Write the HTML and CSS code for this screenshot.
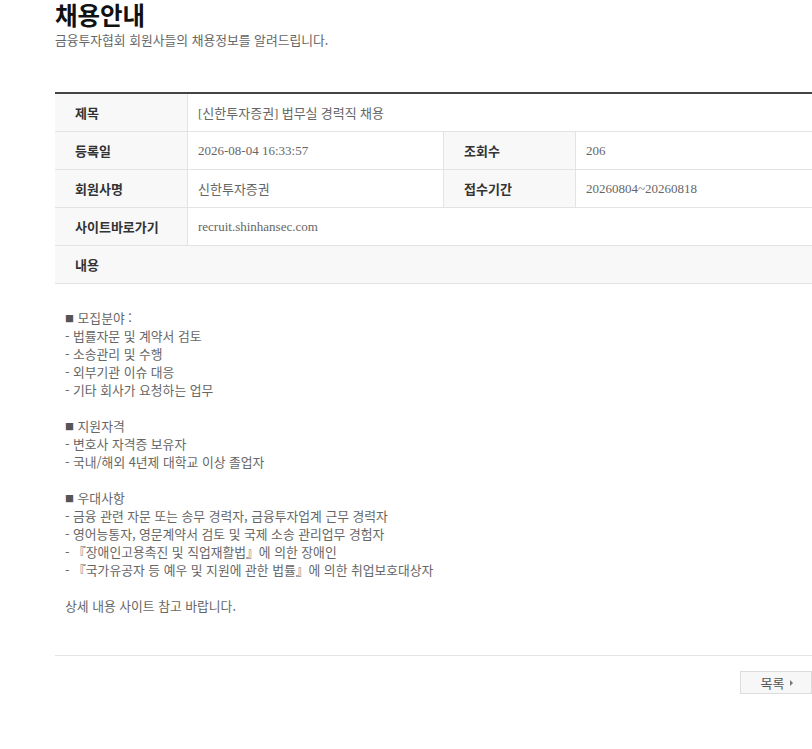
FILE: index.html
```html
<!DOCTYPE html>
<html lang="ko">
<head>
<meta charset="utf-8">
<title>채용안내</title>
<link rel="stylesheet" href="styles.css">
</head>
<body>
<div class="page">
  <h1 class="title">채용안내</h1>
  <p class="subtitle">금융투자협회 회원사들의 채용정보를 알려드립니다.</p>

  <div class="board">
    <div class="th">제목</div>
    <div class="td span3">[신한투자증권] 법무실 경력직 채용</div>

    <div class="th">등록일</div>
    <div class="td">2026-08-04 16:33:57</div>
    <div class="th">조회수</div>
    <div class="td last">206</div>

    <div class="th">회원사명</div>
    <div class="td">신한투자증권</div>
    <div class="th">접수기간</div>
    <div class="td last">20260804~20260818</div>

    <div class="th">사이트바로가기</div>
    <div class="td span3">recruit.shinhansec.com</div>

    <div class="th full">내용</div>
  </div>

  <div class="content">
    <p><span class="sq">■</span> 모집분야 :<br>- 법률자문 및 계약서 검토<br>- 소송관리 및 수행<br>- 외부기관 이슈 대응<br>- 기타 회사가 요청하는 업무</p>
    <p><span class="sq">■</span> 지원자격<br>- 변호사 자격증 보유자<br>- 국내/해외 4년제 대학교 이상 졸업자</p>
    <p><span class="sq">■</span> 우대사항<br>- 금융 관련 자문 또는 송무 경력자, 금융투자업계 근무 경력자<br>- 영어능통자, 영문계약서 검토 및 국제 소송 관리업무 경험자<br>- 『장애인고용촉진 및 직업재활법』에 의한 장애인<br>- 『국가유공자 등 예우 및 지원에 관한 법률』에 의한 취업보호대상자</p>
    <p>상세 내용 사이트 참고 바랍니다.</p>
  </div>

  <div class="actions">
    <a class="btn" href="#">목록<span class="arrow"></span></a>
  </div>
</div>
</body>
</html>
```

FILE: styles.css
```css
html, body {
  margin: 0;
  padding: 0;
  background: #fff;
  overflow-x: hidden;
}

body {
  font-family: "Noto Sans CJK KR", "Noto Sans", sans-serif;
  color: #666;
}

.page {
  margin-left: 55px;
  width: 757px;
}

.title {
  margin: 0;
  padding-top: 1px;
  font-size: 24.5px;
  line-height: 27px;
  font-weight: 700;
  color: #111;
}

.subtitle {
  margin: 4px 0 0;
  font-size: 12.8px;
  line-height: 16px;
  color: #666;
}

.board {
  margin-top: 44px;
  border-top: 2px solid #444;
  display: grid;
  grid-template-columns: 133px 256px 132px 1fr;
}

.th,
.td {
  height: 38px;
  box-sizing: border-box;
  display: flex;
  align-items: center;
  border-bottom: 1px solid #e3e3e3;
  border-right: 1px solid #e3e3e3;
  font-size: 13px;
}

.th {
  background: #f8f8f8;
  padding-left: 20px;
  font-weight: 700;
  color: #333;
}

.td {
  padding-left: 10px;
  color: #666;
  font-family: "Liberation Serif", "Noto Sans CJK KR", serif;
}

.td.last,
.td.span3 {
  border-right: none;
}

.span3 {
  grid-column: span 3;
}

.full {
  grid-column: 1 / -1;
  border-right: none;
}

.content {
  padding: 25px 10px 40px;
  border-bottom: 1px solid #e3e3e3;
  font-size: 12.8px;
  line-height: 18px;
  color: #666;
}

.content p {
  margin: 0 0 18px;
}

.content p:last-child {
  margin-bottom: 0;
}

.sq {
  font-size: 9px;
  line-height: 0;
  color: #555;
  vertical-align: 1px;
}

.actions {
  display: flex;
  justify-content: flex-end;
  margin-top: 15px;
}

.btn {
  width: 72px;
  height: 23px;
  box-sizing: border-box;
  display: flex;
  align-items: center;
  justify-content: center;
  gap: 6px;
  padding-left: 2px;
  background: #f7f7f7;
  border: 1px solid #dcdcdc;
  color: #555;
  font-size: 13px;
  text-decoration: none;
}

.arrow {
  width: 0;
  height: 0;
  border-top: 3px solid transparent;
  border-bottom: 3px solid transparent;
  border-left: 3px solid #777;
}
```
